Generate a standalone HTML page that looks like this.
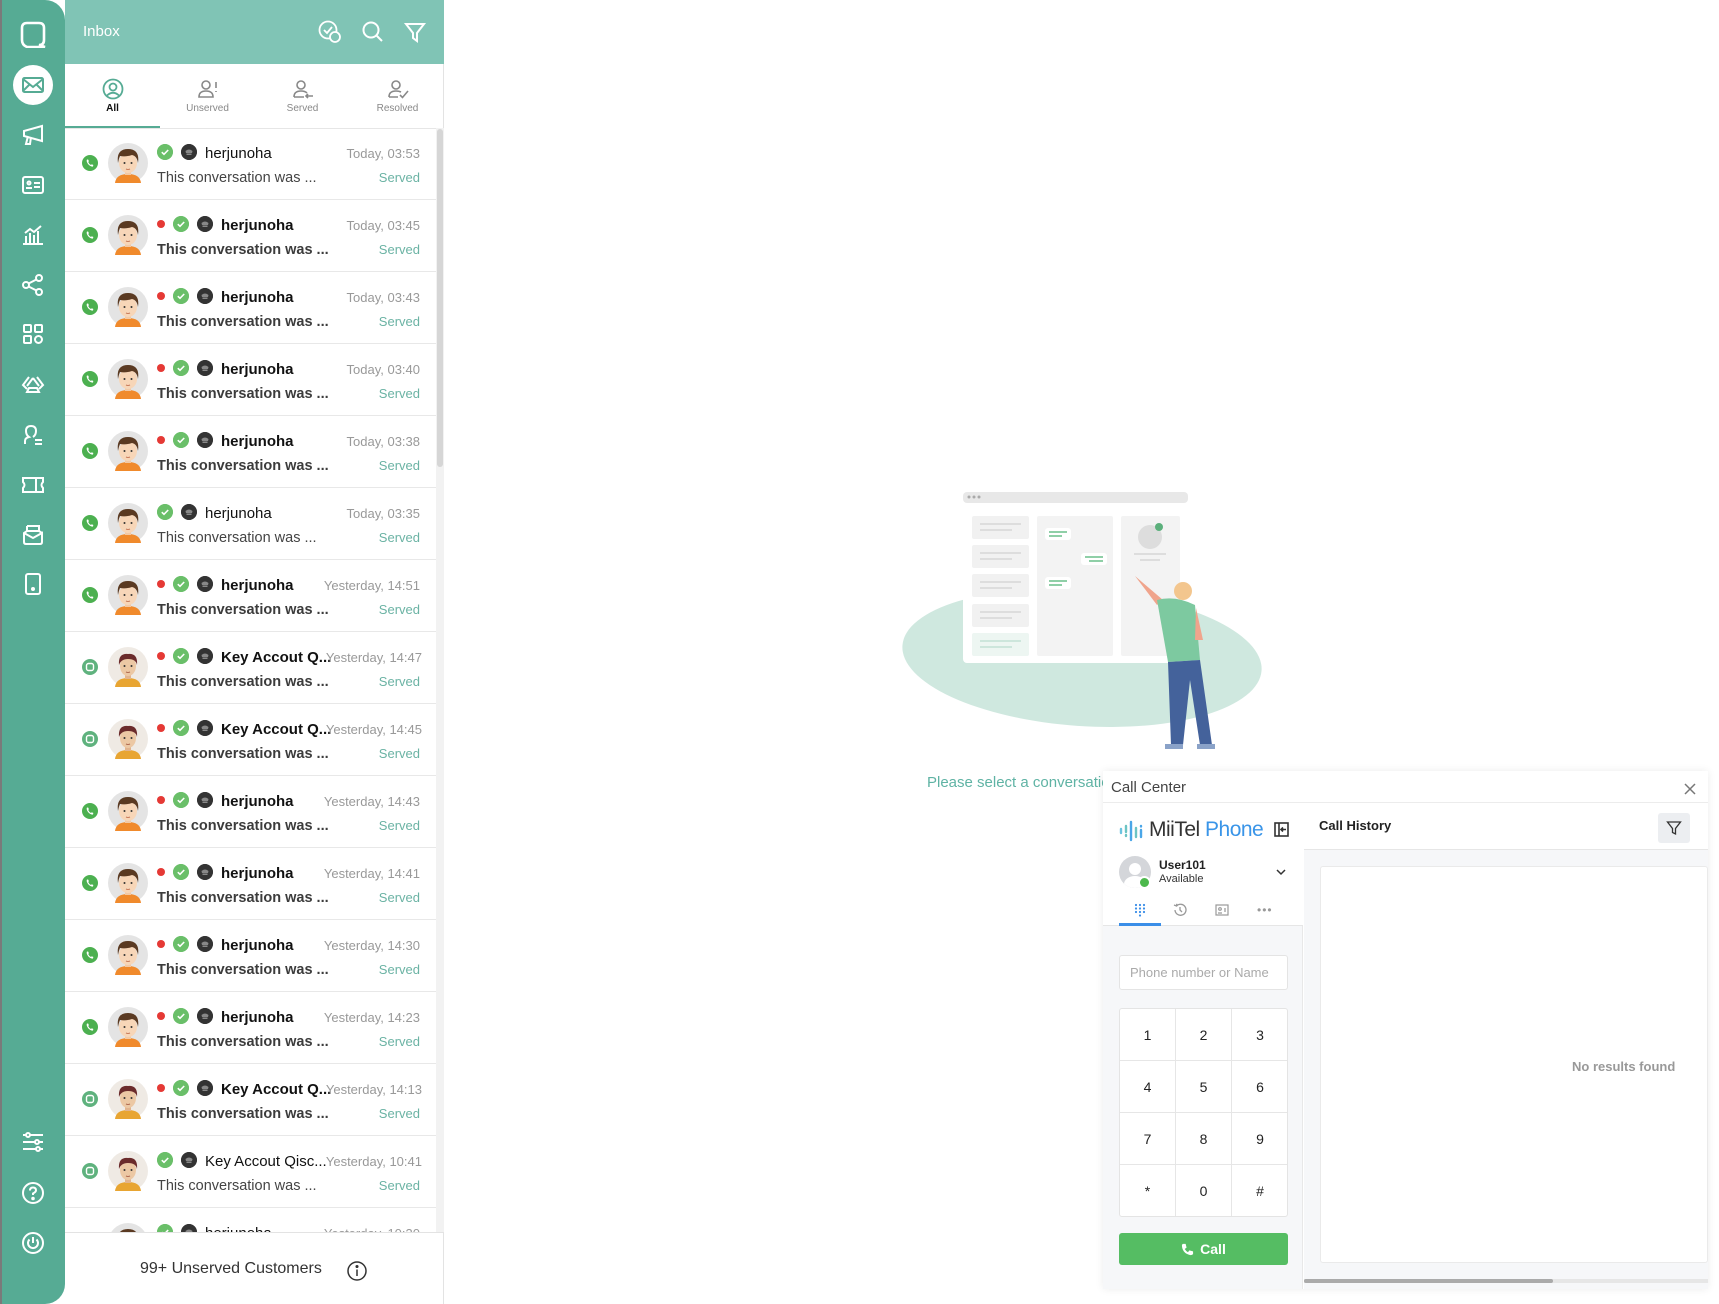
<!DOCTYPE html>
<html><head><meta charset="utf-8">
<style>
*{box-sizing:border-box;margin:0;padding:0}
body{width:1719px;height:1304px;position:relative;overflow:hidden;background:#fff;font-family:"Liberation Sans",sans-serif;}
.abs{position:absolute}
#nav{left:0;top:0;width:65px;height:1304px;background:#56ab94;border-radius:0 20px 20px 0;border-left:2px solid #7a7a7a}
.ni{position:absolute;left:19px;width:24px;height:24px}
#hdr{left:65px;top:0;width:379px;height:64px;background:#80c4b5}
#panel{left:65px;top:64px;width:379px;height:1240px;border-right:1px solid #e3e3e3}
.tab{position:absolute;top:0;width:95px;height:64px;text-align:center;font-size:10px;color:#888}
.tab svg{display:block;margin:14px auto 3px}
.row{position:absolute;left:65px;width:371px;height:72px;border-bottom:1px solid #e8e8e8}
.ch{position:absolute;left:17px;top:27px;width:16px;height:16px}
.av{position:absolute;left:43px;top:15px;width:40px;height:40px}
.rd{position:absolute;top:20px;width:8px;height:8px;border-radius:50%;background:#e53935}
.ck{position:absolute;top:16px;width:16px;height:16px;border-radius:50%;background:#6abf69}
.bk{position:absolute;top:16px;width:16px;height:16px;border-radius:50%;background:#333}
.nm{position:absolute;top:17px;font-size:15px;color:#111;white-space:nowrap}
.pv{position:absolute;left:92px;top:42px;font-size:14.5px;color:#444;white-space:nowrap}
.tm{position:absolute;right:16px;top:18px;font-size:13px;color:#999;white-space:nowrap}
.sv{position:absolute;right:16px;top:42px;font-size:13px;color:#6bb3a4}
.b .nm,.b .pv{font-weight:bold}
.b .pv{color:#3c3c3c}
#cc{left:1103px;top:771px;width:605px;height:518px;background:#fff;box-shadow:0 0 8px rgba(0,0,0,.08)}
.key{position:absolute;width:56px;height:52px;border-right:1px solid #e6e6e6;border-bottom:1px solid #e6e6e6;text-align:center;line-height:52px;font-size:14px;color:#222}
</style></head><body>
<svg width="0" height="0" style="position:absolute">
<defs>
<symbol id="boy" viewBox="0 0 40 40">
<circle cx="20" cy="20" r="20" fill="#e4e4e4"/>
<path d="M7 40 Q8 31 20 31 Q32 31 33 40Z" fill="#f08a2c"/>
<rect x="17" y="25" width="6" height="7" fill="#f2c9a5"/>
<ellipse cx="20" cy="20" rx="9" ry="10" fill="#f7d6b8"/>
<path d="M10 20 Q8 6 20 6 Q32 6 30 20 Q29 13 24 12 Q18 14 12 13 Q11 15 10 20Z" fill="#5a3a22"/>
<circle cx="16.5" cy="20" r="1" fill="#333"/><circle cx="23.5" cy="20" r="1" fill="#333"/>
<path d="M18 26 Q20 27 22 26" stroke="#c87b5b" fill="none"/>
</symbol>
<symbol id="man" viewBox="0 0 40 40">
<circle cx="20" cy="20" r="20" fill="#efeae4"/>
<path d="M7 40 Q8 31 20 31 Q32 31 33 40Z" fill="#e8a532"/>
<rect x="17" y="25" width="6" height="7" fill="#e2b48e"/>
<ellipse cx="20" cy="19" rx="8" ry="10" fill="#ecc8a4"/>
<path d="M11 18 Q10 6 20 7 Q30 6 29 18 Q28 12 20 12 Q13 12 11 18Z" fill="#6b2b2b"/>
<circle cx="16.5" cy="19" r="1" fill="#333"/><circle cx="23.5" cy="19" r="1" fill="#333"/>
<path d="M18 25 Q20 26 22 25" stroke="#b06a50" fill="none"/>
</symbol>
<symbol id="wa" viewBox="0 0 16 16"><circle cx="8" cy="8" r="8" fill="#4cb050"/><path d="M5 4.5 Q4 6 6 9 Q8.5 12 11 11.5 L11.3 10 L9.8 9.3 L9 10 Q7 9 6.2 7 L6.9 6.2 L6.2 4.6Z" fill="#fff"/></symbol>
<symbol id="sq" viewBox="0 0 16 16"><circle cx="8" cy="8" r="8" fill="#5fb27e"/><rect x="4.5" y="4.5" width="7" height="7" rx="2" fill="none" stroke="#fff" stroke-width="1.4"/></symbol>
<symbol id="ckm" viewBox="0 0 16 16"><circle cx="8" cy="8" r="8" fill="#6abf69"/><path d="M4.8 8.2 L7 10.3 L11.2 6" stroke="#fff" stroke-width="1.6" fill="none"/></symbol>
<symbol id="bkm" viewBox="0 0 16 16"><circle cx="8" cy="8" r="8" fill="#333"/><path d="M4.5 7 Q8 4 11.5 7 L11 9 L5 9Z M5.5 9.5 H10.5 V11 H5.5Z" fill="#888"/></symbol>
</defs></svg>

<!-- NAV -->
<div id="nav" class="abs">
<svg class="ni" style="top:20px;left:17px;width:28px;height:28px" viewBox="0 0 28 28" fill="none" stroke="#fff" stroke-width="2.6"><path d="M8 3 H20 Q25 3 25 8 V20 Q25 25 20 25 L26 27 H8 Q3 25 3 20 V8 Q3 3 8 3Z"/></svg>
<div class="abs" style="left:11px;top:65px;width:40px;height:40px;border-radius:50%;background:#fff"></div>
<svg class="ni" style="top:73px" viewBox="0 0 24 24" fill="none" stroke="#56ab94" stroke-width="2"><rect x="2" y="5" width="20" height="14" rx="1.5"/><path d="M2 6 L12 14 L22 6 M2 18 L9 11 M22 18 L15 11"/></svg>
<svg class="ni" style="top:123px" viewBox="0 0 24 24" fill="none" stroke="#fff" stroke-width="2"><path d="M3 8 L21 3 V18 L3 13Z M7 13 L5 21 H9 L10 14"/></svg>
<svg class="ni" style="top:173px" viewBox="0 0 24 24" fill="none" stroke="#fff" stroke-width="2"><rect x="2" y="4" width="20" height="16" rx="2"/><circle cx="8" cy="10" r="1.5"/><path d="M5 15 H11 M13 10 H19 M13 14 H19"/></svg>
<svg class="ni" style="top:223px" viewBox="0 0 24 24" fill="none" stroke="#fff" stroke-width="2"><path d="M2 21 H22 M5 20 V13 M9 20 V10 M13 20 V12 M17 20 V8 M4 10 L9 6 L13 9 L20 3"/></svg>
<svg class="ni" style="top:273px" viewBox="0 0 24 24" fill="none" stroke="#fff" stroke-width="2"><circle cx="5" cy="12" r="3"/><circle cx="18" cy="5" r="3"/><circle cx="18" cy="19" r="3"/><path d="M7.6 10.5 L15.4 6.5 M7.6 13.5 L15.4 17.5"/></svg>
<svg class="ni" style="top:322px" viewBox="0 0 24 24" fill="none" stroke="#fff" stroke-width="2"><rect x="3" y="3" width="7" height="7" rx="1"/><rect x="14" y="3" width="7" height="7" rx="1"/><rect x="3" y="14" width="7" height="7" rx="1"/><circle cx="17.5" cy="17.5" r="3.5"/></svg>
<svg class="ni" style="top:373px" viewBox="0 0 24 24" fill="none" stroke="#fff" stroke-width="2"><path d="M8 4 L2 12 L6 16 M16 4 L22 12 L18 16 M12 5 L6 13 M12 5 L18 13 M6 19 H18 L16 15 H8Z"/></svg>
<svg class="ni" style="top:423px" viewBox="0 0 24 24" fill="none" stroke="#fff" stroke-width="2"><path d="M4 21 V18 Q4 15 8 14 Q5 12 5 8 Q5 3 10 3 Q15 3 15 8 Q15 12 12 14 M14 17 H21 M14 21 H21"/></svg>
<svg class="ni" style="top:473px" viewBox="0 0 24 24" fill="none" stroke="#fff" stroke-width="2"><path d="M2 5 H22 V9 Q19 12 22 15 V19 H2 V15 Q5 12 2 9Z M15 5 V19"/></svg>
<svg class="ni" style="top:523px" viewBox="0 0 24 24" fill="none" stroke="#fff" stroke-width="2"><path d="M6 3 H18 V8 M6 3 V8 M3 10 L12 15 L21 10 V19 Q21 21 19 21 H5 Q3 21 3 19 V10 L6 8 H18 L21 10"/></svg>
<svg class="ni" style="top:572px" viewBox="0 0 24 24" fill="none" stroke="#fff" stroke-width="2"><rect x="5" y="2" width="14" height="20" rx="2"/><circle cx="12" cy="17" r="1" fill="#fff"/></svg>
<svg class="ni" style="top:1130px" viewBox="0 0 24 24" fill="none" stroke="#fff" stroke-width="2"><path d="M2 5 H22 M2 12 H22 M2 19 H22"/><circle cx="7" cy="5" r="2" fill="#56ab94"/><circle cx="16" cy="12" r="2" fill="#56ab94"/><circle cx="17" cy="19" r="2" fill="#56ab94"/></svg>
<svg class="ni" style="top:1181px" viewBox="0 0 24 24" fill="none" stroke="#fff" stroke-width="2"><circle cx="12" cy="12" r="10"/><path d="M9 9.5 Q9 6.5 12 6.5 Q15 6.5 15 9.3 Q15 11 12 12.5 V14"/><circle cx="12" cy="17.5" r=".8" fill="#fff"/></svg>
<svg class="ni" style="top:1231px" viewBox="0 0 24 24" fill="none" stroke="#fff" stroke-width="2"><circle cx="12" cy="12" r="10"/><path d="M8.5 8.5 A5 5 0 1 0 15.5 8.5 M12 6 V12"/></svg>
</div>

<!-- HEADER -->
<div id="hdr" class="abs">
<div class="abs" style="left:18px;top:23px;color:#fff;font-size:15px">Inbox</div>
<svg class="abs" style="left:253px;top:20px" width="24" height="24" viewBox="0 0 24 24" fill="none" stroke="#fff" stroke-width="1.8"><circle cx="10" cy="10" r="8.5"/><path d="M6 10 L9 13 L14 7"/><circle cx="17" cy="17" r="5" fill="#80c4b5"/></svg>
<svg class="abs" style="left:296px;top:20px" width="24" height="24" viewBox="0 0 24 24" fill="none" stroke="#fff" stroke-width="2"><circle cx="10" cy="10" r="7.5"/><path d="M15.5 15.5 L21 21"/></svg>
<svg class="abs" style="left:338px;top:20px" width="24" height="24" viewBox="0 0 24 24" fill="none" stroke="#fff" stroke-width="2"><path d="M3 4 H21 L14 13 V21 L10 18 V13Z"/></svg>
</div>

<!-- PANEL -->
<div id="panel" class="abs">
<div class="tab" style="left:0;color:#111;font-weight:bold"><svg width="22" height="22" viewBox="0 0 22 22" fill="none" stroke="#56ab94" stroke-width="1.8"><circle cx="11" cy="11" r="9.5"/><circle cx="11" cy="9" r="3.5"/><path d="M5 17.5 Q11 12 17 17.5"/></svg>All</div>
<div class="tab" style="left:95px"><svg width="22" height="22" viewBox="0 0 22 22" fill="none" stroke="#888" stroke-width="1.6"><circle cx="9" cy="7" r="4"/><path d="M2 19 Q2 13 9 13 Q16 13 16 19Z M19 4 V10 M19 13 V14"/></svg>Unserved</div>
<div class="tab" style="left:190px"><svg width="22" height="22" viewBox="0 0 22 22" fill="none" stroke="#888" stroke-width="1.6"><circle cx="9" cy="7" r="4"/><path d="M2 19 Q2 13 9 13 Q13 13 15 15 M2 19 H12 M14 18 H21 M16 16 L14 18 L16 20"/></svg>Served</div>
<div class="tab" style="left:285px"><svg width="22" height="22" viewBox="0 0 22 22" fill="none" stroke="#888" stroke-width="1.6"><circle cx="9" cy="7" r="4"/><path d="M2 19 Q2 13 9 13 Q12 13 14 14 M2 19 H11 M13 17 L15.5 19.5 L21 13"/></svg>Resolved</div>
<div class="abs" style="left:0;top:62px;width:95px;height:3px;background:#56ab94"></div>
<div class="abs" style="left:0;top:64px;width:379px;height:1px;background:#e6e6e6"></div>
<div class="abs" style="left:371px;top:64px;width:8px;height:1104px;background:#f2f2f2"></div>
<div class="abs" style="left:372px;top:65px;width:6px;height:338px;background:#d6d6d6;border-radius:3px"></div>
</div>

<div id="rows">
<div class="row" style="top:128px"><svg class="ch"><use href="#wa"/></svg><svg class="av"><use href="#boy"/></svg><svg class="ck" style="left:92px"><use href="#ckm"/></svg><svg class="bk" style="left:116px"><use href="#bkm"/></svg><div class="nm" style="left:140px">herjunoha</div><div class="tm">Today, 03:53</div><div class="pv">This conversation was ...</div><div class="sv">Served</div></div>
<div class="row b" style="top:200px"><svg class="ch"><use href="#wa"/></svg><svg class="av"><use href="#boy"/></svg><div class="rd" style="left:92px"></div><svg class="ck" style="left:108px"><use href="#ckm"/></svg><svg class="bk" style="left:132px"><use href="#bkm"/></svg><div class="nm" style="left:156px">herjunoha</div><div class="tm">Today, 03:45</div><div class="pv">This conversation was ...</div><div class="sv">Served</div></div>
<div class="row b" style="top:272px"><svg class="ch"><use href="#wa"/></svg><svg class="av"><use href="#boy"/></svg><div class="rd" style="left:92px"></div><svg class="ck" style="left:108px"><use href="#ckm"/></svg><svg class="bk" style="left:132px"><use href="#bkm"/></svg><div class="nm" style="left:156px">herjunoha</div><div class="tm">Today, 03:43</div><div class="pv">This conversation was ...</div><div class="sv">Served</div></div>
<div class="row b" style="top:344px"><svg class="ch"><use href="#wa"/></svg><svg class="av"><use href="#boy"/></svg><div class="rd" style="left:92px"></div><svg class="ck" style="left:108px"><use href="#ckm"/></svg><svg class="bk" style="left:132px"><use href="#bkm"/></svg><div class="nm" style="left:156px">herjunoha</div><div class="tm">Today, 03:40</div><div class="pv">This conversation was ...</div><div class="sv">Served</div></div>
<div class="row b" style="top:416px"><svg class="ch"><use href="#wa"/></svg><svg class="av"><use href="#boy"/></svg><div class="rd" style="left:92px"></div><svg class="ck" style="left:108px"><use href="#ckm"/></svg><svg class="bk" style="left:132px"><use href="#bkm"/></svg><div class="nm" style="left:156px">herjunoha</div><div class="tm">Today, 03:38</div><div class="pv">This conversation was ...</div><div class="sv">Served</div></div>
<div class="row" style="top:488px"><svg class="ch"><use href="#wa"/></svg><svg class="av"><use href="#boy"/></svg><svg class="ck" style="left:92px"><use href="#ckm"/></svg><svg class="bk" style="left:116px"><use href="#bkm"/></svg><div class="nm" style="left:140px">herjunoha</div><div class="tm">Today, 03:35</div><div class="pv">This conversation was ...</div><div class="sv">Served</div></div>
<div class="row b" style="top:560px"><svg class="ch"><use href="#wa"/></svg><svg class="av"><use href="#boy"/></svg><div class="rd" style="left:92px"></div><svg class="ck" style="left:108px"><use href="#ckm"/></svg><svg class="bk" style="left:132px"><use href="#bkm"/></svg><div class="nm" style="left:156px">herjunoha</div><div class="tm">Yesterday, 14:51</div><div class="pv">This conversation was ...</div><div class="sv">Served</div></div>
<div class="row b" style="top:632px"><svg class="ch"><use href="#sq"/></svg><svg class="av"><use href="#man"/></svg><div class="rd" style="left:92px"></div><svg class="ck" style="left:108px"><use href="#ckm"/></svg><svg class="bk" style="left:132px"><use href="#bkm"/></svg><div class="nm" style="left:156px">Key Accout Q...</div><div class="tm" style="right:14px">Yesterday, 14:47</div><div class="pv">This conversation was ...</div><div class="sv">Served</div></div>
<div class="row b" style="top:704px"><svg class="ch"><use href="#sq"/></svg><svg class="av"><use href="#man"/></svg><div class="rd" style="left:92px"></div><svg class="ck" style="left:108px"><use href="#ckm"/></svg><svg class="bk" style="left:132px"><use href="#bkm"/></svg><div class="nm" style="left:156px">Key Accout Q...</div><div class="tm" style="right:14px">Yesterday, 14:45</div><div class="pv">This conversation was ...</div><div class="sv">Served</div></div>
<div class="row b" style="top:776px"><svg class="ch"><use href="#wa"/></svg><svg class="av"><use href="#boy"/></svg><div class="rd" style="left:92px"></div><svg class="ck" style="left:108px"><use href="#ckm"/></svg><svg class="bk" style="left:132px"><use href="#bkm"/></svg><div class="nm" style="left:156px">herjunoha</div><div class="tm">Yesterday, 14:43</div><div class="pv">This conversation was ...</div><div class="sv">Served</div></div>
<div class="row b" style="top:848px"><svg class="ch"><use href="#wa"/></svg><svg class="av"><use href="#boy"/></svg><div class="rd" style="left:92px"></div><svg class="ck" style="left:108px"><use href="#ckm"/></svg><svg class="bk" style="left:132px"><use href="#bkm"/></svg><div class="nm" style="left:156px">herjunoha</div><div class="tm">Yesterday, 14:41</div><div class="pv">This conversation was ...</div><div class="sv">Served</div></div>
<div class="row b" style="top:920px"><svg class="ch"><use href="#wa"/></svg><svg class="av"><use href="#boy"/></svg><div class="rd" style="left:92px"></div><svg class="ck" style="left:108px"><use href="#ckm"/></svg><svg class="bk" style="left:132px"><use href="#bkm"/></svg><div class="nm" style="left:156px">herjunoha</div><div class="tm">Yesterday, 14:30</div><div class="pv">This conversation was ...</div><div class="sv">Served</div></div>
<div class="row b" style="top:992px"><svg class="ch"><use href="#wa"/></svg><svg class="av"><use href="#boy"/></svg><div class="rd" style="left:92px"></div><svg class="ck" style="left:108px"><use href="#ckm"/></svg><svg class="bk" style="left:132px"><use href="#bkm"/></svg><div class="nm" style="left:156px">herjunoha</div><div class="tm">Yesterday, 14:23</div><div class="pv">This conversation was ...</div><div class="sv">Served</div></div>
<div class="row b" style="top:1064px"><svg class="ch"><use href="#sq"/></svg><svg class="av"><use href="#man"/></svg><div class="rd" style="left:92px"></div><svg class="ck" style="left:108px"><use href="#ckm"/></svg><svg class="bk" style="left:132px"><use href="#bkm"/></svg><div class="nm" style="left:156px">Key Accout Q...</div><div class="tm" style="right:14px">Yesterday, 14:13</div><div class="pv">This conversation was ...</div><div class="sv">Served</div></div>
<div class="row" style="top:1136px"><svg class="ch"><use href="#sq"/></svg><svg class="av"><use href="#man"/></svg><svg class="ck" style="left:92px"><use href="#ckm"/></svg><svg class="bk" style="left:116px"><use href="#bkm"/></svg><div class="nm" style="left:140px">Key Accout Qisc...</div><div class="tm" style="right:14px">Yesterday, 10:41</div><div class="pv">This conversation was ...</div><div class="sv">Served</div></div>
<div class="row" style="top:1208px;height:24px;overflow:hidden;border:none"><svg class="av"><use href="#boy"/></svg><svg class="ck" style="left:92px"><use href="#ckm"/></svg><svg class="bk" style="left:116px"><use href="#bkm"/></svg><div class="nm" style="left:140px">herjunoha</div><div class="tm">Yesterday, 10:30</div></div>
</div>
<div class="abs" style="left:65px;top:1232px;width:379px;height:72px;background:#fff;border-top:1px solid #e3e3e3;border-right:1px solid #e3e3e3">
<div class="abs" style="left:75px;top:27px;font-size:16px;color:#333">99+ Unserved Customers</div>
<svg class="abs" style="left:282px;top:28px" width="20" height="20" viewBox="0 0 20 20" fill="none" stroke="#333" stroke-width="1.5"><circle cx="10" cy="10" r="9"/><path d="M10 8.5 V15"/><circle cx="10" cy="5.5" r=".8" fill="#333"/></svg>
</div>

<!-- ILLUSTRATION -->
<svg class="abs" style="left:890px;top:480px" width="380" height="290" viewBox="890 480 380 290">
<ellipse cx="1082" cy="658" rx="180" ry="68" fill="#cfe8df" transform="rotate(4 1082 658)"/>
<rect x="963" y="492" width="225" height="171" rx="4" fill="#fff"/>
<rect x="963" y="492" width="225" height="11" rx="4" fill="#e8e8e8"/>
<circle cx="969" cy="497" r="1.5" fill="#aaa"/><circle cx="974" cy="497" r="1.5" fill="#aaa"/><circle cx="979" cy="497" r="1.5" fill="#aaa"/>
<g fill="#f1f1f1"><rect x="972" y="516" width="57" height="23" rx="2"/><rect x="972" y="545" width="57" height="23" rx="2"/><rect x="972" y="574" width="57" height="23" rx="2"/><rect x="972" y="604" width="57" height="23" rx="2"/></g>
<rect x="972" y="633" width="57" height="23" rx="2" fill="#edf6f2"/>
<g stroke="#ddd" stroke-width="2"><path d="M980 524 H1021 M980 530 H1012 M980 553 H1021 M980 559 H1012 M980 582 H1021 M980 588 H1012 M980 612 H1021 M980 618 H1012"/></g>
<path d="M980 641 H1021 M980 647 H1012" stroke="#cde6dc" stroke-width="2"/>
<rect x="1037" y="516" width="76" height="140" rx="2" fill="#f3f3f3"/>
<rect x="1121" y="516" width="59" height="140" rx="2" fill="#f3f3f3"/>
<rect x="1045" y="528" width="26" height="12" rx="3" fill="#fff"/><rect x="1081" y="553" width="26" height="12" rx="3" fill="#fff"/><rect x="1045" y="577" width="26" height="12" rx="3" fill="#fff"/>
<path d="M1049 532 H1067 M1049 536 H1062 M1085 557 H1103 M1089 561 H1103 M1049 581 H1067 M1049 585 H1062" stroke="#6abf8a" stroke-width="1.5"/>
<circle cx="1150" cy="537" r="12" fill="#ddd"/><circle cx="1159" cy="527" r="4" fill="#5cb07c"/>
<path d="M1134 554 H1166 M1140 560 H1160" stroke="#ddd" stroke-width="2"/>
<path d="M1135 576 L1157 605 L1163 600 Z" fill="#f0a48c"/>
<path d="M1157 600 Q1175 595 1195 605 L1200 660 L1168 662 Z" fill="#7dc9a0"/>
<path d="M1168 662 L1200 660 L1212 745 L1200 745 L1190 680 L1183 745 L1171 745 Z" fill="#44629b"/>
<circle cx="1183" cy="591" r="9" fill="#f3c68e"/>
<path d="M1196 608 L1203 640 L1195 640 Z" fill="#f0a48c"/>
<rect x="1165" y="744" width="18" height="5" fill="#8aa2c8"/><rect x="1197" y="744" width="18" height="5" fill="#8aa2c8"/>
</svg>
<div class="abs" style="left:927px;top:774px;font-size:15px;color:#5fb3a4">Please select a conversatio</div>

<!-- CALL CENTER -->
<div id="cc" class="abs">
<div class="abs" style="left:8px;top:8px;font-size:15px;color:#444">Call Center</div>
<svg class="abs" style="left:581px;top:12px" width="12" height="12" viewBox="0 0 12 12" stroke="#777" stroke-width="1.5"><path d="M1 1 L11 11 M11 1 L1 11"/></svg>
<div class="abs" style="left:0;top:31px;width:605px;height:1px;background:#ececec"></div>
<!-- left col -->
<div class="abs" style="left:0;top:32px;width:200px;height:486px;background:#f6f7f9;border-right:1px solid #e8e8e8">
<div class="abs" style="left:0;top:0;width:200px;height:123px;background:#fff;border-bottom:1px solid #e6e6e6"></div>
<svg class="abs" style="left:16px;top:17px" width="28" height="22" viewBox="0 0 28 22"><g stroke-width="2.4" stroke-linecap="round"><path d="M2 9 V13" stroke="#6cc4e0"/><path d="M7 6 V12 M7 15 V16" stroke="#6cc4c4"/><path d="M12 2 V20" stroke="#4aa6e8"/><path d="M17 8 V17" stroke="#6cc4c4"/><path d="M22 10 V17 M22 6 V6.5" stroke="#4aa6e8"/></g></svg>
<div class="abs" style="left:46px;top:15px;font-size:21px;color:#333;letter-spacing:-.5px">MiiTel <span style="color:#3a95e8">Phone</span></div>
<svg class="abs" style="left:171px;top:19px" width="15" height="15" viewBox="0 0 15 15" fill="none" stroke="#333" stroke-width="1.6"><rect x="1" y="1" width="13" height="13"/><path d="M5 1 V14 M12 7.5 H7 M9 5.5 L7 7.5 L9 9.5"/></svg>
<div class="abs" style="left:16px;top:53px;width:32px;height:32px;border-radius:50%;background:#d4d6da;overflow:hidden"><div class="abs" style="left:10px;top:7px;width:12px;height:12px;border-radius:50%;background:#fff"></div><div class="abs" style="left:5px;top:20px;width:22px;height:16px;border-radius:50%;background:#fff"></div></div>
<div class="abs" style="left:35px;top:73px;width:13px;height:13px;border-radius:50%;background:#4cb84c;border:2px solid #fff"></div>
<div class="abs" style="left:56px;top:55px;font-size:12px;color:#222;font-weight:bold">User101</div>
<div class="abs" style="left:56px;top:70px;font-size:11px;color:#333">Available</div>
<svg class="abs" style="left:173px;top:65px" width="10" height="8" viewBox="0 0 10 8" fill="none" stroke="#333" stroke-width="1.5"><path d="M1 2 L5 6 L9 2"/></svg>
<svg class="abs" style="left:31px;top:100px" width="12" height="14" viewBox="0 0 12 14" fill="#3a8ee8"><circle cx="2" cy="2" r="1.1"/><circle cx="6" cy="2" r="1.1"/><circle cx="10" cy="2" r="1.1"/><circle cx="2" cy="5.5" r="1.1"/><circle cx="6" cy="5.5" r="1.1"/><circle cx="10" cy="5.5" r="1.1"/><circle cx="2" cy="9" r="1.1"/><circle cx="6" cy="9" r="1.1"/><circle cx="10" cy="9" r="1.1"/><circle cx="6" cy="12.5" r="1.1"/></svg>
<svg class="abs" style="left:70px;top:100px" width="14" height="14" viewBox="0 0 14 14" fill="none" stroke="#999" stroke-width="1.3"><path d="M2 7 A5.5 5.5 0 1 0 3.5 3 M1 2 L3.5 3 L3.8 0.8 M7 4 V7 L9 9"/></svg>
<svg class="abs" style="left:112px;top:101px" width="14" height="12" viewBox="0 0 14 12" fill="none" stroke="#999" stroke-width="1.2"><rect x="1" y="1" width="12" height="10"/><circle cx="5" cy="5" r="1.3"/><path d="M3 9 H7 M9 5 H11 M9 7 H11"/></svg>
<div class="abs" style="left:154px;top:100px;font-size:12px;color:#999;letter-spacing:1px">•••</div>
<div class="abs" style="left:16px;top:120px;width:42px;height:3px;background:#3a8ee8"></div>
<div class="abs" style="left:16px;top:152px;width:169px;height:35px;background:#fff;border:1px solid #e4e4e4;border-radius:3px;font-size:13px;color:#aaa;line-height:33px;padding-left:10px">Phone number or Name</div>
<div class="abs" style="left:16px;top:205px;width:169px;height:209px;background:#fff;border:1px solid #e4e4e4;border-radius:3px;overflow:hidden">
<div class="key" style="left:0;top:0">1</div><div class="key" style="left:56px;top:0">2</div><div class="key" style="left:112px;top:0;border-right:none">3</div>
<div class="key" style="left:0;top:52px">4</div><div class="key" style="left:56px;top:52px">5</div><div class="key" style="left:112px;top:52px;border-right:none">6</div>
<div class="key" style="left:0;top:104px">7</div><div class="key" style="left:56px;top:104px">8</div><div class="key" style="left:112px;top:104px;border-right:none">9</div>
<div class="key" style="left:0;top:156px;border-bottom:none">*</div><div class="key" style="left:56px;top:156px;border-bottom:none">0</div><div class="key" style="left:112px;top:156px;border:none">#</div>
</div>
<div class="abs" style="left:16px;top:430px;width:169px;height:32px;background:#55bd63;border-radius:3px;color:#fff;font-weight:bold;font-size:14px;line-height:32px;text-align:center"><svg width="13" height="13" viewBox="0 0 14 14" style="vertical-align:-2px;margin-right:6px"><path d="M2 1 L5 1 L6 5 L4 6.5 Q5.5 9 7.5 10 L9 8 L13 9 V12 Q12 13 10 13 Q1 11 1 2Z" fill="#fff"/></svg>Call</div>
</div>
<!-- right col -->
<div class="abs" style="left:201px;top:32px;width:404px;height:486px;background:#f6f7f9">
<div class="abs" style="left:0;top:0;width:404px;height:47px;background:#fff;border-bottom:1px solid #e6e6e6"></div>
<div class="abs" style="left:15px;top:15px;font-size:13px;font-weight:bold;color:#222">Call History</div>
<div class="abs" style="left:354px;top:10px;width:32px;height:30px;background:#eceef1;border-radius:3px"></div>
<svg class="abs" style="left:362px;top:17px" width="16" height="16" viewBox="0 0 16 16" fill="none" stroke="#333" stroke-width="1.3"><path d="M1.5 2 H14.5 L9.5 8.5 V14 L6.5 12.5 V8.5Z"/></svg>
<div class="abs" style="left:16px;top:63px;width:388px;height:397px;background:#fff;border:1px solid #eaeaea;border-radius:3px"></div>
<div class="abs" style="left:268px;top:256px;font-size:13px;color:#999;font-weight:bold">No results found</div>
<div class="abs" style="left:0;top:476px;width:404px;height:4px;background:#e6e6e6"></div>
<div class="abs" style="left:0;top:476px;width:249px;height:4px;background:#aaa;border-radius:2px"></div>
</div>
</div>
</body></html>
